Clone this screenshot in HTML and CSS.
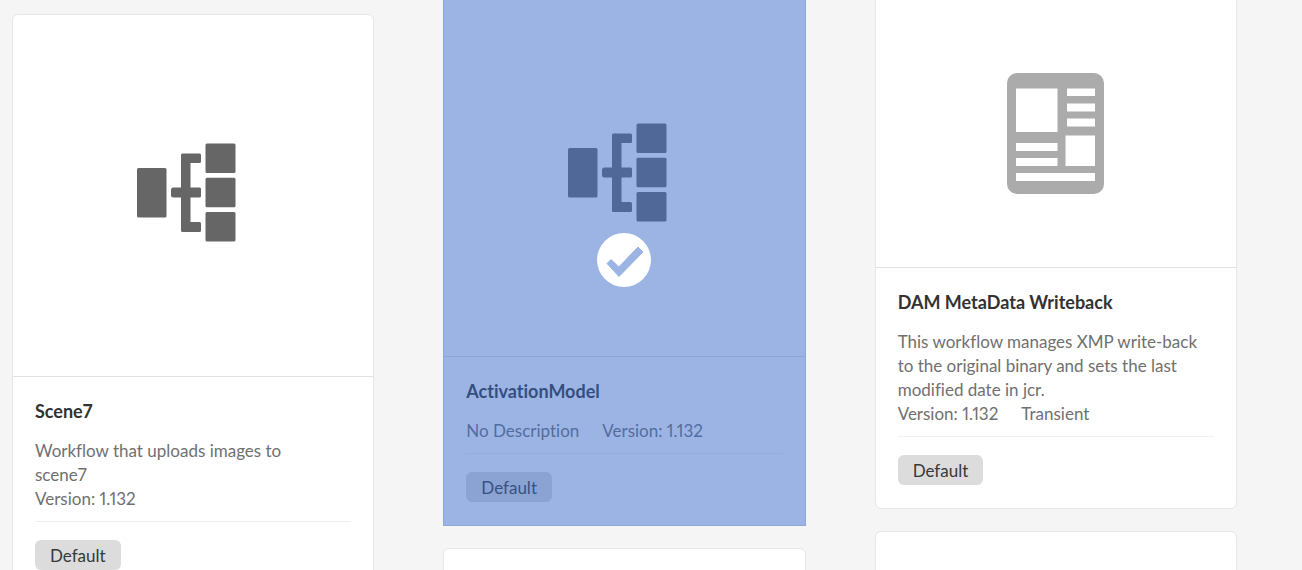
FILE: index.html
```html
<!DOCTYPE html>
<html lang="en">
<head>
<meta charset="utf-8">
<title>Workflow Models</title>
<link rel="stylesheet" href="styles.css">
</head>
<body>
<svg class="symbols" aria-hidden="true">
  <symbol id="workflow" viewBox="0 0 112 106">
    <rect x="0" y="25" width="29.5" height="49.5" rx="1.5"/>
    <path d="M45.5 10.5H62.5a1.5 1.5 0 0 1 1.5 1.5V18.500a1.500 1.500 0 0 1-1.500 1.500H53.500V44.500H62.500a1.500 1.500 0 0 1 1.500 1.500V53a1.500 1.500 0 0 1-1.500 1.500H53.500V79H62.500a1.500 1.500 0 0 1 1.500 1.500V87.500a1.500 1.500 0 0 1-1.500 1.500H45.500a1.500 1.500 0 0 1-1.500-1.500V54.500H36.500a2.500 2.500 0 0 1-2.500-2.500V47a2.500 2.500 0 0 1 2.500-2.500H44V12a1.500 1.500 0 0 1 1.500-1.500z"/>
    <rect x="68.500" y="0.500" width="30" height="29.500" rx="1.500"/>
    <rect x="68.500" y="34.700" width="30" height="29.500" rx="1.500"/>
    <rect x="68.500" y="69" width="30" height="29.500" rx="1.500"/>
  </symbol>
</svg>
<main class="board">
  <div class="column column-first">
    <article class="card">
      <div class="media"><svg class="icon-workflow"><use href="#workflow"/></svg></div>
      <div class="content">
        <h2 class="title">Scene7</h2>
        <div class="details"><p class="description">Workflow that uploads images to<br>scene7</p><span>Version: 1.132</span></div>
        <span class="tag">Default</span>
      </div>
    </article>
  </div>
  <div class="column column-second">
    <article class="card selected">
      <div class="media"><svg class="icon-workflow"><use href="#workflow"/></svg></div>
      <div class="content">
        <h2 class="title">ActivationModel</h2>
        <div class="details"><p class="description">No Description</p><span>Version: 1.132</span></div>
        <span class="tag">Default</span>
      </div>
      <div class="overlay">
        <svg class="check" viewBox="0 0 54 54" role="img" aria-label="Selected">
          <circle cx="27" cy="27" r="27" fill="#fff"/>
          <path d="M10 30.500L14 26.500L21.800 34L41 14L46 19L22 43.500Z" fill="#9bb4e4" stroke="#9bb4e4" stroke-width="1" stroke-linejoin="round"/>
        </svg>
      </div>
    </article>
    <article class="card"><div class="media"></div></article>
  </div>
  <div class="column column-third">
    <article class="card">
      <div class="media media-short">
        <svg class="icon-document" viewBox="0 0 97 121">
          <path fill="#ababab" fill-rule="evenodd" d="M10 0H87a10 10 0 0 1 10 10V111a10 10 0 0 1-10 10H10a10 10 0 0 1-10-10V10a10 10 0 0 1 10-10zM9 15.500V59H50.500V15.500zM60 15.500V23H88V15.500zM60 30.500V38.500H88V30.500zM60 45.500V53.500H88V45.500zM58.500 62.500V93H88V62.500zM9 70V78H50.500V70zM9 85V93H50.500V85zM9 100V108H88V100z"/>
        </svg>
      </div>
      <div class="content">
        <h2 class="title">DAM MetaData Writeback</h2>
        <div class="details"><p class="description">This workflow manages XMP write-back<br>to the original binary and sets the last<br>modified date in jcr.</p><span>Version: 1.132</span><span>Transient</span></div>
        <span class="tag">Default</span>
      </div>
    </article>
    <article class="card"><div class="media"></div></article>
  </div>
</main>
</body>
</html>
```
FILE: styles.css
```css
* { box-sizing: border-box; }
body {
  margin: 0;
  background: #f5f5f5;
  color: #707070;
  font: 17px/24px Lato, "Open Sans", sans-serif;
  font-variant-numeric: proportional-nums;
  font-variant-ligatures: no-common-ligatures;
}
.symbols { display: none; }
.board {
  display: grid;
  grid-template-columns: repeat(3, minmax(0, 1fr));
  gap: 69px;
  height: 100vh;
  padding: 0 65px 0 12px;
  overflow: hidden;
}
.column {
  display: flex;
  flex-direction: column;
  gap: 22px;
}
.column-first { padding-top: 14px; }
.column-second { margin-top: -6px; }
.column-third { margin-top: -9px; }
.card {
  position: relative;
  flex: none;
  background: #fff;
  border: 1px solid #e6e6e6;
  border-radius: 6px;
}
.media {
  box-sizing: content-box;
  display: flex;
  align-items: center;
  justify-content: center;
  aspect-ratio: 1;
  padding-top: 1px;
  border-bottom: 1px solid #e2e2e2;
}
.media-short {
  aspect-ratio: auto;
  height: 267px;
  padding-top: 8px;
}
.icon-workflow {
  width: 112px;
  height: 106px;
  fill: #666;
}
.icon-document {
  width: 97px;
  height: 121px;
}
.content { padding: 22px 22px 23px; }
.title {
  margin: 0 0 16px;
  color: #323232;
  font-size: 18px;
  line-height: 24px;
  font-weight: 700;
}
.details {
  display: flex;
  flex-wrap: wrap;
  column-gap: 23px;
  margin-bottom: 18px;
  padding-bottom: 10px;
  border-bottom: 1px solid #f0f0f0;
}
.description { margin: 0; }
.tag {
  display: block;
  width: fit-content;
  padding: 2px 15px 0;
  border-radius: 6px;
  background: #dcdcdc;
  color: #383838;
  line-height: 28px;
}
.selected { border-radius: 0; }
.overlay {
  position: absolute;
  inset: -1px;
  display: flex;
  align-items: center;
  justify-content: center;
  background: rgba(55, 105, 201, 0.5);
}
.check {
  width: 54px;
  height: 54px;
}
```
